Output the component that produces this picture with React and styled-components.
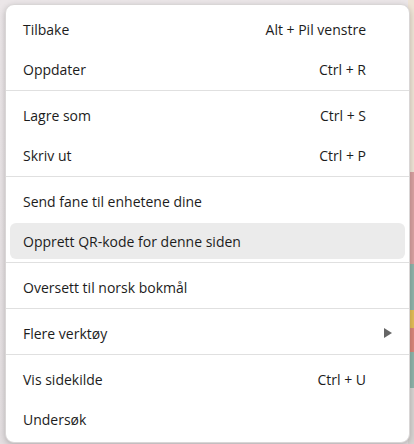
import React from "react";
import styled, { createGlobalStyle } from "styled-components";

const Global = createGlobalStyle`
  html, body { margin: 0; padding: 0; }
  body { width: 414px; height: 444px; overflow: hidden; background: #e6e1e3; }
`;

const Page = styled.div`
  position: relative;
  width: 414px;
  height: 444px;
  display: flex;
  flex-direction: row;
  justify-content: flex-end;
  background: linear-gradient(180deg, #ebe6e8 0%, #e4dfe1 100%);
`;

const Strips = styled.div`
  width: 6px;
  display: flex;
  flex-direction: column;
`;

const Strip = styled.div`
  height: ${(p) => p.$h}px;
  background: ${(p) => p.$c};
`;

const Menu = styled.div`
  position: absolute;
  left: 5px;
  top: 4px;
  width: 405px;
  box-sizing: border-box;
  padding: 4px 0 3px;
  background: #ffffff;
  border: 1px solid #d9d6d6;
  border-radius: 9px;
  box-shadow: 0 2px 6px rgba(0, 0, 0, 0.22);
  font-family: "Open Sans", "Noto Sans", sans-serif;
  font-size: 14px;
  color: #1c1c1c;
`;

const Item = styled.div`
  height: 40px;
  display: flex;
  align-items: center;
  padding: 2px 4px;
  box-sizing: border-box;
`;

const ItemInner = styled.div`
  flex: 1;
  height: 100%;
  display: flex;
  align-items: center;
  justify-content: space-between;
  padding: 0 39px 0 13px;
  border-radius: 6px;
  background: ${(p) => (p.$hover ? "#ebebeb" : "transparent")};
  position: relative;
`;

const Label = styled.span`
  white-space: nowrap;
`;

const Shortcut = styled.span`
  white-space: nowrap;
`;

const Arrow = styled.svg`
  position: absolute;
  right: 13px;
  top: 50%;
  transform: translateY(-50%);
`;

const Sep = styled.div`
  height: 6px;
  box-sizing: border-box;
  padding-top: 1px;
  display: flex;
  align-items: flex-start;
  &::before {
    content: "";
    flex: 1;
    height: 1px;
    background: #e0e0e0;
  }
`;

const groups = [
  [
    { label: "Tilbake", sc: "Alt + Pil venstre" },
    { label: "Oppdater", sc: "Ctrl + R" },
  ],
  [
    { label: "Lagre som", sc: "Ctrl + S" },
    { label: "Skriv ut", sc: "Ctrl + P" },
  ],
  [
    { label: "Send fane til enhetene dine" },
    { label: "Opprett QR-kode for denne siden", hover: true },
  ],
  [{ label: "Oversett til norsk bokmål" }],
  [{ label: "Flere verktøy", sub: true }],
  [
    { label: "Vis sidekilde", sc: "Ctrl + U" },
    { label: "Undersøk" },
  ],
];

export default function App() {
  return (
    <>
      <Global />
      <Page>
        <Strips>
          <Strip $h={172} $c="#efe4d6" />
          <Strip $h={92} $c="#d9a1a1" />
          <Strip $h={46} $c="#8fb4aa" />
          <Strip $h={18} $c="#e3bd58" />
          <Strip $h={24} $c="#d9867a" />
          <Strip $h={36} $c="#8fb4aa" />
          <Strip $h={56} $c="#d8d4d2" />
        </Strips>
        <Menu>
          {groups.map((g, gi) => (
            <React.Fragment key={gi}>
              {gi > 0 && <Sep />}
              {g.map((it) => (
                <Item key={it.label}>
                  <ItemInner $hover={it.hover}>
                    <Label>{it.label}</Label>
                    {it.sc && <Shortcut>{it.sc}</Shortcut>}
                    {it.sub && (
                      <Arrow width="8" height="10" viewBox="0 0 8 10">
                        <path d="M0 0 L8 5 L0 10 Z" fill="#666666" />
                      </Arrow>
                    )}
                  </ItemInner>
                </Item>
              ))}
            </React.Fragment>
          ))}
        </Menu>
      </Page>
    </>
  );
}
